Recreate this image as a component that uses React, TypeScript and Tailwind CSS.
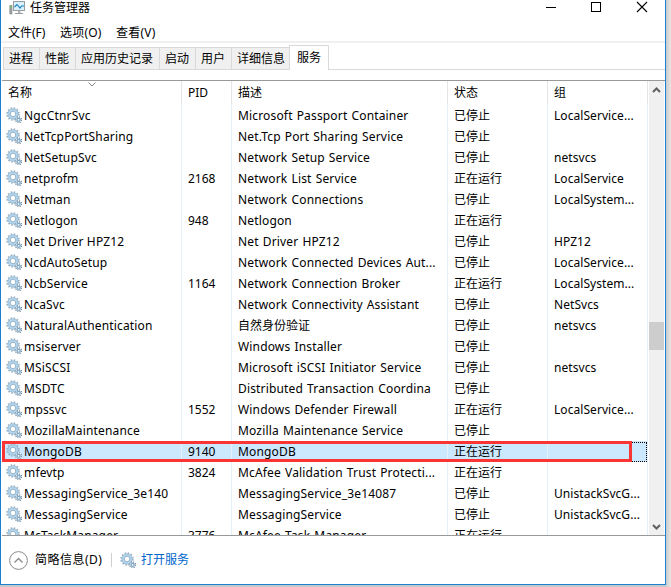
const RUN = '正在运行';
const STOP = '已停止';

type Row = [name: string, pid: string, desc: string, status: string, group: string];

const rows: Row[] = [
  ['NgcCtnrSvc', '', 'Microsoft Passport Container', STOP, 'LocalService...'],
  ['NetTcpPortSharing', '', 'Net.Tcp Port Sharing Service', STOP, ''],
  ['NetSetupSvc', '', 'Network Setup Service', STOP, 'netsvcs'],
  ['netprofm', '2168', 'Network List Service', RUN, 'LocalService'],
  ['Netman', '', 'Network Connections', STOP, 'LocalSystem...'],
  ['Netlogon', '948', 'Netlogon', RUN, ''],
  ['Net Driver HPZ12', '', 'Net Driver HPZ12', STOP, 'HPZ12'],
  ['NcdAutoSetup', '', 'Network Connected Devices Aut...', STOP, 'LocalService...'],
  ['NcbService', '1164', 'Network Connection Broker', RUN, 'LocalSystem...'],
  ['NcaSvc', '', 'Network Connectivity Assistant', STOP, 'NetSvcs'],
  ['NaturalAuthentication', '', '自然身份验证', STOP, 'netsvcs'],
  ['msiserver', '', 'Windows Installer', STOP, ''],
  ['MSiSCSI', '', 'Microsoft iSCSI Initiator Service', STOP, 'netsvcs'],
  ['MSDTC', '', 'Distributed Transaction Coordina', STOP, ''],
  ['mpssvc', '1552', 'Windows Defender Firewall', RUN, 'LocalService...'],
  ['MozillaMaintenance', '', 'Mozilla Maintenance Service', STOP, ''],
  ['MongoDB', '9140', 'MongoDB', RUN, ''],
  ['mfevtp', '3824', 'McAfee Validation Trust Protecti...', RUN, ''],
  ['MessagingService_3e140', '', 'MessagingService_3e14087', STOP, 'UnistackSvcG...'],
  ['MessagingService', '', 'MessagingService', STOP, 'UnistackSvcG...'],
  ['McTaskManager', '3776', 'McAfee Task Manager', RUN, ''],
];

const tabs: [label: string, width: string][] = [
  ['进程', 'w-[36px]'],
  ['性能', 'w-[36px]'],
  ['应用历史记录', 'w-[84px]'],
  ['启动', 'w-[36px]'],
  ['用户', 'w-[36px]'],
  ['详细信息', 'w-[58px]'],
];

function Gears() {
  return (
    <svg className="mb-px block h-4 w-4 shrink-0" viewBox="0 0 16 16" fill="none">
      <circle cx="7" cy="7" r="6" stroke="#9db4c4" strokeWidth="1.6" strokeDasharray="1.57 1.57" />
      <circle cx="7" cy="7" r="4.1" stroke="#b4d6ee" strokeWidth="2.4" />
      <circle cx="7" cy="7" r="5.2" stroke="#86a9c2" strokeWidth="0.6" />
      <circle cx="7" cy="7" r="2.8" fill="#fff" stroke="#789fba" strokeWidth="0.8" />
      <circle cx="12.6" cy="12.8" r="3" fill="#fff" stroke="#768d9e" strokeWidth="1.2" strokeDasharray="1.18 1.18" />
      <circle cx="12.6" cy="12.8" r="1.6" fill="#fff" stroke="#7fa9c8" strokeWidth="1.4" />
    </svg>
  );
}

function TaskIcon() {
  return (
    <svg className="block h-4 w-4" viewBox="0 0 16 16" fill="none">
      <rect x="0.8" y="5.5" width="2.2" height="8.5" fill="#9a9d9f" stroke="#8a8c8e" strokeWidth="0.6" />
      <rect x="1" y="6" width="1.5" height="2" fill="#6fc060" />
      <rect x="4.5" y="1.5" width="11" height="9" fill="#d7f0fb" stroke="#979da0" />
      <path d="M5.500 7L8 4.500L11 8L12.500 6L15 6" stroke="#1c7fc0" strokeWidth="1.1" />
      <path d="M9 11h2.500v2H9z" fill="#b2b5b7" />
      <path d="M6 13.500h8" stroke="#9a9d9f" />
    </svg>
  );
}

function Header({ label, width }: { label: string; width: string }) {
  return (
    <div className={`${width} h-6 shrink-0 border-r border-[#e5e5e5] pl-[6px] leading-6`}>{label}</div>
  );
}

const cell = 'h-full shrink-0 overflow-hidden whitespace-nowrap border-r border-[#e5f0fb]';

function ServiceRow({ row }: { row: Row }) {
  const [name, pid, desc, status, group] = row;
  const selected = name === 'MongoDB';
  const latin = desc.charCodeAt(0) < 128;
  return (
    <div className={`relative flex h-[21px] w-[645px] shrink-0 leading-[21px] ${selected ? 'bg-[#cce8ff]' : ''}`}>
      <div className={`${cell} flex w-[180px] items-center gap-[2px] pl-1`}>
        <Gears />
        <span className="tracking-[0.16px]">{name}</span>
      </div>
      <div className={`${cell} w-[50px] pl-[6px]`}>{pid}</div>
      <div className={`${cell} w-[216px] pl-[6px] ${latin ? 'tracking-[0.16px] [word-spacing:0.8px]' : ''}`}>{desc}</div>
      <div className={`${cell} w-[100px] pl-[6px]`}>{status}</div>
      <div className={`${cell} w-[100px] pl-[6px] tracking-[0.06px]`}>{group}</div>
      {selected && (
        <>
          <div className="absolute inset-x-0 bottom-0 top-px border border-dotted border-black" />
          <div className="absolute left-0 top-0 h-[21px] w-[630px] border-[3px] border-[#fb3434]" />
        </>
      )}
    </div>
  );
}

export default function App() {
  return (
    <div className="flex h-[587px] w-[671px] flex-col overflow-hidden bg-gradient-to-r from-[#c8c8c8] from-[99.2%] to-[#e8e8e8] font-['Noto_Sans','Noto_Sans_CJK_SC',sans-serif] text-[12px] text-black">
      <div className="flex h-[585px] w-[666px] flex-col border-x border-b border-[#1a80d4] bg-white">
        <div className="flex h-[22px] shrink-0 justify-between">
          <div className="flex gap-[5px] pl-2">
            <TaskIcon />
            <span className="h-4 leading-4">任务管理器</span>
          </div>
          <svg className="h-[22px] w-[140px]" viewBox="0 0 140 22" fill="none" stroke="#000">
            <path d="M21 7.500h10" />
            <rect x="66.500" y="2.500" width="9" height="9" />
            <path d="M112 2L122 12M122 2L112 12" strokeWidth="1.1" />
          </svg>
        </div>
        <div className="flex h-[21px] shrink-0 gap-[14px] whitespace-nowrap border-b-2 border-[#f0f0f0] pl-[7px] leading-[22px]">
          <span className="w-[38px]">文件(F)</span>
          <span className="w-[42px] tracking-[0.2px]">选项(O)</span>
          <span className="tracking-[0.25px]">查看(V)</span>
        </div>
        <div className="flex h-[27px] shrink-0 items-end pl-[2px]">
          {tabs.map(([label, width]) => (
            <div
              key={label}
              className={`${width} h-[23px] shrink-0 border-b border-l border-t border-[#d9d9d9] bg-[#f0f0f0] pl-[5px] leading-[22px]`}
            >
              {label}
            </div>
          ))}
          <div className="h-[25px] w-10 shrink-0 border-x border-t border-[#d9d9d9] pl-[7px] leading-[23px]">服务</div>
          <div className="h-px grow bg-[#d9d9d9]" />
        </div>
        <div className="ml-px mt-[10px] flex h-[456px] shrink-0 border-y border-[#999]">
          <div className="flex w-[647px] flex-col overflow-hidden">
            <div className="relative flex h-6 shrink-0">
              <Header label="名称" width="w-[180px]" />
              <Header label="PID" width="w-[50px]" />
              <Header label="描述" width="w-[216px]" />
              <Header label="状态" width="w-[100px]" />
              <Header label="组" width="w-[100px]" />
              <svg className="absolute left-[86px] top-[1px] h-[5px] w-2" viewBox="0 0 8 5" fill="none">
                <path d="M0.500 0.500L4 4L7.500 0.500" stroke="#858585" />
              </svg>
            </div>
            {rows.map((row) => (
              <ServiceRow key={row[0]} row={row} />
            ))}
          </div>
          <div className="flex w-[15px] flex-col items-center bg-[#f0f0f0]">
            <svg className="h-[241px] w-[15px] shrink-0" viewBox="0 0 15 241" fill="none">
              <path d="M4 11L7.500 7.500L11 11" stroke="#606060" strokeWidth="2" />
            </svg>
            <div className="h-7 w-full shrink-0 bg-[#cdcdcd]" />
            <svg className="h-[185px] w-[15px] shrink-0" viewBox="0 0 15 185" fill="none">
              <path d="M4 175L7.500 178.500L11 175" stroke="#606060" strokeWidth="2" />
            </svg>
          </div>
        </div>
        <div className="flex grow items-center pl-2">
          <svg className="h-[19px] w-[19px]" viewBox="0 0 19 19" fill="none" stroke="#8a8a8a">
            <circle cx="9.500" cy="9.500" r="8.900" />
            <path d="M5.500 11.500L9.500 7.500L13.500 11.500" strokeWidth="1.4" />
          </svg>
          <span className="ml-[7px] w-[76px] tracking-[0.5px]">简略信息(D)</span>
          <div className="h-[14px] w-px bg-[#cfcfcf]" />
          <div className="ml-2"><Gears /></div>
          <span className="ml-[5px] text-[#0066cc]">打开服务</span>
        </div>
      </div>
    </div>
  );
}
